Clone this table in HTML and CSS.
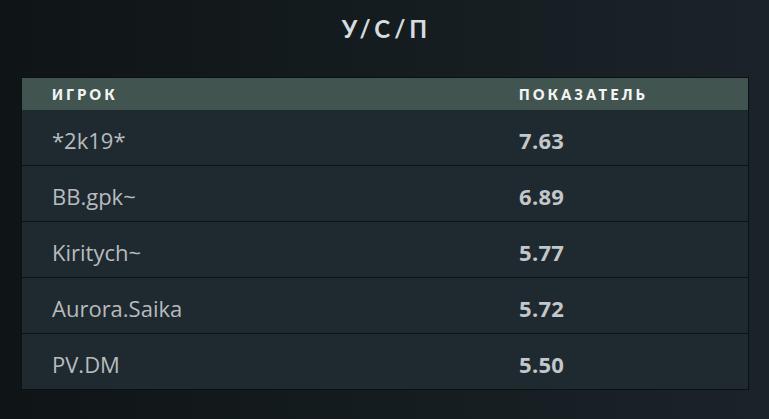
FILE: index.html
```html
<!DOCTYPE html>
<html lang="ru">
<head>
<meta charset="utf-8">
<link rel="stylesheet" href="styles.css">
</head>
<body>
<div class="page">
  <h1 class="title">У/С/П</h1>
  <div class="table">
    <div class="row head">
      <div class="c1">ИГРОК</div>
      <div class="c2">ПОКАЗАТЕЛЬ</div>
    </div>
    <div class="row"><div class="c1">*2k19*</div><div class="c2 val">7.63</div></div>
    <div class="row"><div class="c1">BB.gpk~</div><div class="c2 val">6.89</div></div>
    <div class="row"><div class="c1">Kiritych~</div><div class="c2 val">5.77</div></div>
    <div class="row"><div class="c1">Aurora.Saika</div><div class="c2 val">5.72</div></div>
    <div class="row last"><div class="c1">PV.DM</div><div class="c2 val">5.50</div></div>
  </div>
</div>
</body>
</html>
```
FILE: styles.css
```css
html, body {
  margin: 0;
  padding: 0;
}
body {
  width: 769px;
  height: 419px;
  overflow: hidden;
  background: linear-gradient(90deg, #0f1516 0%, #151c1f 50%, #1b232a 100%);
  font-family: "Open Sans", Lato, sans-serif;
}
.page {
  padding: 13px 21px 0 21px;
}
.title {
  margin: 0;
  height: 37px;
  line-height: 32px;
  text-align: center;
  font-family: Lato, sans-serif;
  font-size: 24px;
  font-weight: 700;
  color: #d6dcdf;
  letter-spacing: 4px;
  padding-left: 4px;
}
.table {
  margin-top: 27px;
  width: 726px;
  border: 1px solid #0c1012;
  background: #1f2a30;
}
.row {
  display: flex;
  align-items: center;
  height: 55px;
  padding-top: 5px;
  box-sizing: border-box;
  border-bottom: 1px solid #0d1214;
  color: #b7bbbe;
  font-size: 22px;
}
.row:not(.head) {
  height: 56px;
}
.row.last {
  border-bottom: none;
  height: 55px;
}
.row.head {
  height: 32px;
  padding-top: 0;
  border-bottom: none;
  background: #42544f;
  color: #f2f4f4;
  font-family: Lato, sans-serif;
  font-size: 14px;
  font-weight: 800;
  letter-spacing: 3.4px;
}
.c1 {
  width: 467px;
  padding-left: 30px;
}
.c2 {
  flex: 1;
}
.val {
  font-weight: 700;
  color: #c3c7c9;
  letter-spacing: 0.3px;
}
```
